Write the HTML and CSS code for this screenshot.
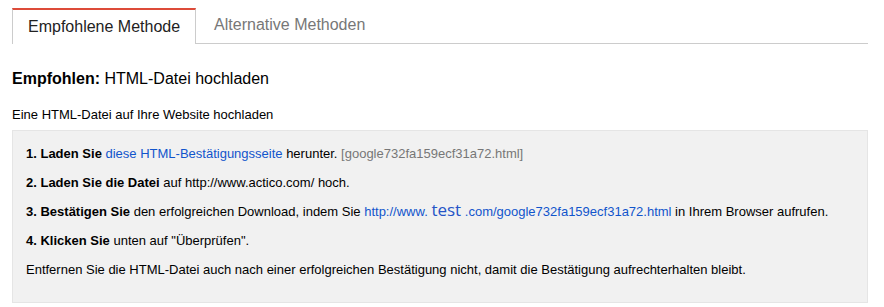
FILE: index.html
```html
<!DOCTYPE html>
<html>
<head>
  <title>HTML-Datei hochladen</title>
  <link rel="stylesheet" href="styles.css">
</head>
<body>
  <div class="page">
    <div class="tabs">
      <div class="tab active">Empfohlene Methode</div>
      <div class="tab">Alternative Methoden</div>
    </div>

    <h2 class="method-title"><b>Empfohlen:</b> HTML-Datei hochladen</h2>
    <p class="method-sub">Eine HTML-Datei auf Ihre Website hochladen</p>

    <div class="steps">
      <p class="step"><b>1. Laden Sie</b> <a href="#">diese HTML-Bestätigungsseite</a> herunter. <span class="file-name">[google732fa159ecf31a72.html]</span></p>
      <p class="step"><b>2. Laden Sie die Datei</b> auf http://www.actico.com/ hoch.</p>
      <p class="step"><b>3. Bestätigen Sie</b> den erfolgreichen Download, indem Sie <a href="#">http://www. <span class="site">test</span> .com/google732fa159ecf31a72.html</a> in Ihrem Browser aufrufen.</p>
      <p class="step"><b>4. Klicken Sie</b> unten auf "Überprüfen".</p>
      <p class="step">Entfernen Sie die HTML-Datei auch nach einer erfolgreichen Bestätigung nicht, damit die Bestätigung aufrechterhalten bleibt.</p>
    </div>
  </div>
</body>
</html>
```

FILE: styles.css
```css
body {
  font-family: Arial, "Liberation Sans", sans-serif;
  background-color: #fff;
  color: #222;
  margin: 0;
  padding: 0;
}

.page {
  width: 856px;
  padding: 8px 0 0 12px;
}

.tabs {
  display: flex;
  height: 35px;
  border-bottom: 1px solid #ccc;
}

.tab {
  box-sizing: border-box;
  height: 35px;
  padding: 0 15px 0 18px;
  font-size: 16px;
  line-height: 33px;
  color: #777;
}

.tab.active {
  height: 36px;
  padding: 0 15px;
  color: #222;
  background-color: #fff;
  border: 1px solid #ccc;
  border-top: 2px solid #dd4b39;
  border-bottom: none;
}

.method-title {
  margin: 25px 0 0;
  font-size: 16px;
  font-weight: normal;
  line-height: 19px;
  color: #000;
}

.method-sub {
  margin: 19px 0 0;
  font-size: 13px;
  line-height: 15px;
  color: #000;
}

.steps {
  margin-top: 8px;
  padding: 14px 13px 24px;
  background-color: #f1f1f1;
  border: 1px solid #e5e5e5;
}

.step {
  margin: 0 0 12px;
  font-size: 13px;
  line-height: 17px;
  color: #000;
}

.step:last-child {
  margin-bottom: 0;
}

.step a {
  color: #15c;
  text-decoration: none;
}

.file-name {
  color: #777;
}

.site {
  font-family: "Open Sans", sans-serif;
  font-size: 17px;
  line-height: 0;
  color: #2554c7;
}
```
